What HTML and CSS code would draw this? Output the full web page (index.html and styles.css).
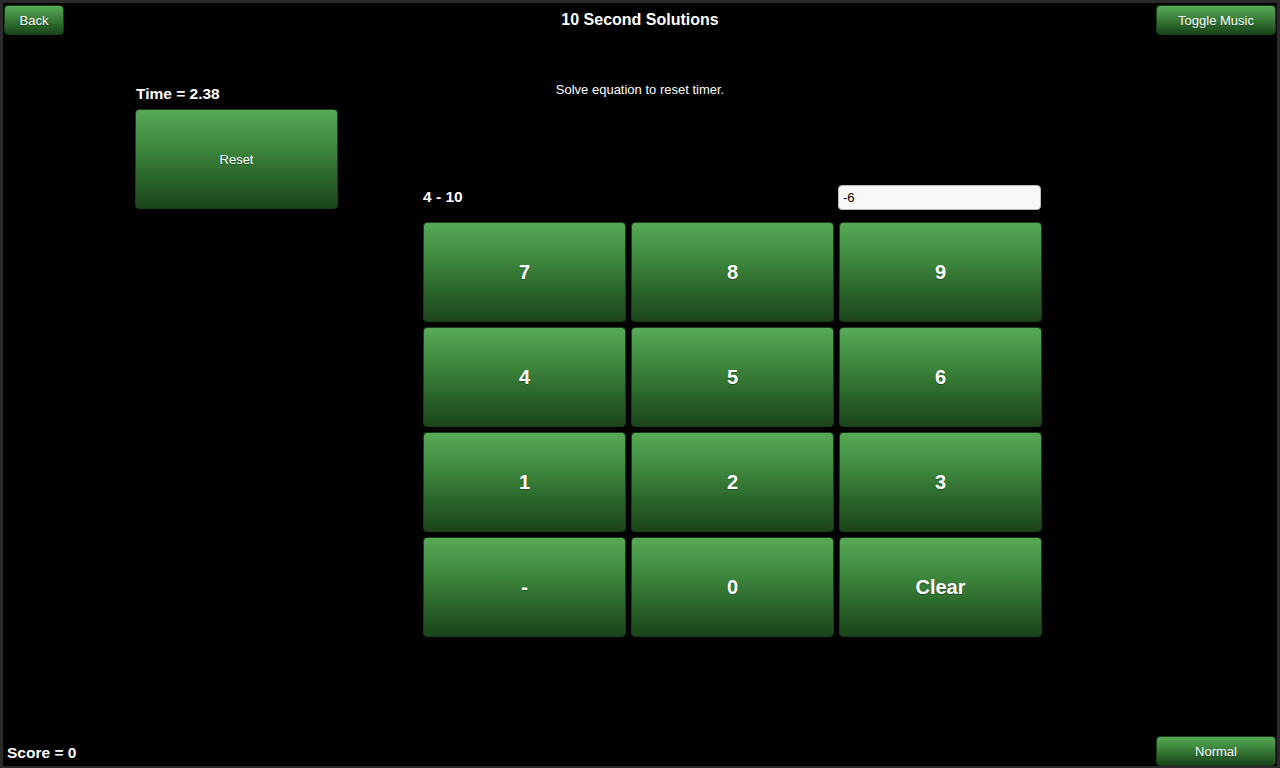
FILE: index.html
```html
<!DOCTYPE html>
<html>
<head>
<meta charset="utf-8">
<title>10 Second Solutions</title>
<link rel="stylesheet" href="styles.css">
</head>
<body>
<div class="app">
  <header class="topbar">
    <div class="topbar-left"><button class="btn btn-small btn-back">Back</button></div>
    <h1 class="title">10 Second Solutions</h1>
    <div class="topbar-right"><button class="btn btn-small btn-wide">Toggle Music</button></div>
  </header>
  <main class="board">
    <p class="subtitle">Solve equation to reset timer.</p>
    <div class="time">Time = 2.38</div>
    <button class="btn btn-reset">Reset</button>
    <section class="solver">
      <div class="equation-row">
        <span class="equation">4 - 10</span>
        <input class="answer" type="text" value="-6">
      </div>
      <div class="keypad">
        <button class="btn key">7</button>
        <button class="btn key">8</button>
        <button class="btn key">9</button>
        <button class="btn key">4</button>
        <button class="btn key">5</button>
        <button class="btn key">6</button>
        <button class="btn key">1</button>
        <button class="btn key">2</button>
        <button class="btn key">3</button>
        <button class="btn key">-</button>
        <button class="btn key">0</button>
        <button class="btn key">Clear</button>
      </div>
    </section>
  </main>
  <footer class="bottombar">
    <span class="score">Score = 0</span>
    <button class="btn btn-small btn-wide">Normal</button>
  </footer>
</div>
</body>
</html>
```
FILE: styles.css
```css
* { box-sizing: border-box; }
html, body { margin: 0; padding: 0; background: #000; }
body { font-family: "Liberation Sans", Arial, sans-serif; color: #fff; }

.app {
  width: 1280px;
  height: 768px;
  border-style: solid;
  border-color: #2b2b2b;
  border-width: 3px 3px 2px 3px;
  background: #000;
  display: flex;
  flex-direction: column;
}

.btn {
  font-family: "Liberation Sans", Arial, sans-serif;
  color: #fff;
  border: 1px solid #1a3d1a;
  border-radius: 4px;
  background: linear-gradient(to bottom, #57a957 0%, #3f8a3f 35%, #2a642a 70%, #1b451b 100%);
  padding: 0;
  margin: 0;
  cursor: pointer;
  text-shadow: 0 1px 1px rgba(0,0,0,0.35);
}

.topbar {
  display: grid;
  grid-template-columns: 1fr auto 1fr;
  align-items: start;
  padding: 2px 1px 0 1px;
  height: 32px;
}
.topbar-right { display: flex; justify-content: flex-end; }
.btn-small {
  height: 30px;
  font-size: 13px;
}
.btn-back { width: 60px; }
.btn-wide { width: 120px; }
.title {
  margin: 0;
  font-size: 16px;
  font-weight: bold;
  line-height: 30px;
}

.board {
  margin-top: 47px;
  display: grid;
  grid-template-columns: 132px 203px 85px 619px 1fr;
  grid-template-rows: 20px auto;
}
.subtitle {
  grid-column: 1 / -1;
  grid-row: 1;
  margin: 0;
  text-align: center;
  font-size: 13px;
  line-height: 16px;
  align-self: start;
}
.time {
  grid-column: 2;
  grid-row: 1;
  align-self: end;
  font-size: 15.5px;
  font-weight: bold;
  line-height: 16px;
  padding-left: 1px;
}
.btn-reset {
  grid-column: 2;
  grid-row: 2;
  margin-top: 7px;
  height: 100px;
  align-self: start;
  font-size: 13px;
}
.solver {
  grid-column: 4;
  grid-row: 2;
  padding-top: 83px;
}
.equation-row {
  display: flex;
  justify-content: space-between;
  align-items: center;
  height: 24px;
}
.equation {
  font-size: 15.5px;
  font-weight: bold;
  line-height: 22px;
}
.answer {
  width: 203px;
  height: 25px;
  border: 1px solid #bbb;
  border-radius: 4px;
  background: #f8f8f8;
  font-family: "Liberation Sans", Arial, sans-serif;
  font-size: 13px;
  color: #000;
  padding: 0 4px;
  margin: 0 1px 0 0;
}
.keypad {
  margin-top: 13px;
  display: grid;
  grid-template-columns: repeat(3, 203px);
  grid-auto-rows: 100px;
  gap: 5px;
}
.key {
  font-size: 20px;
  font-weight: bold;
}

.bottombar {
  margin-top: auto;
  display: flex;
  justify-content: space-between;
  align-items: flex-end;
  padding: 0 1px 0 4px;
}
.score {
  font-size: 15.5px;
  font-weight: bold;
  line-height: 16px;
  margin-bottom: 5px;
}
```
